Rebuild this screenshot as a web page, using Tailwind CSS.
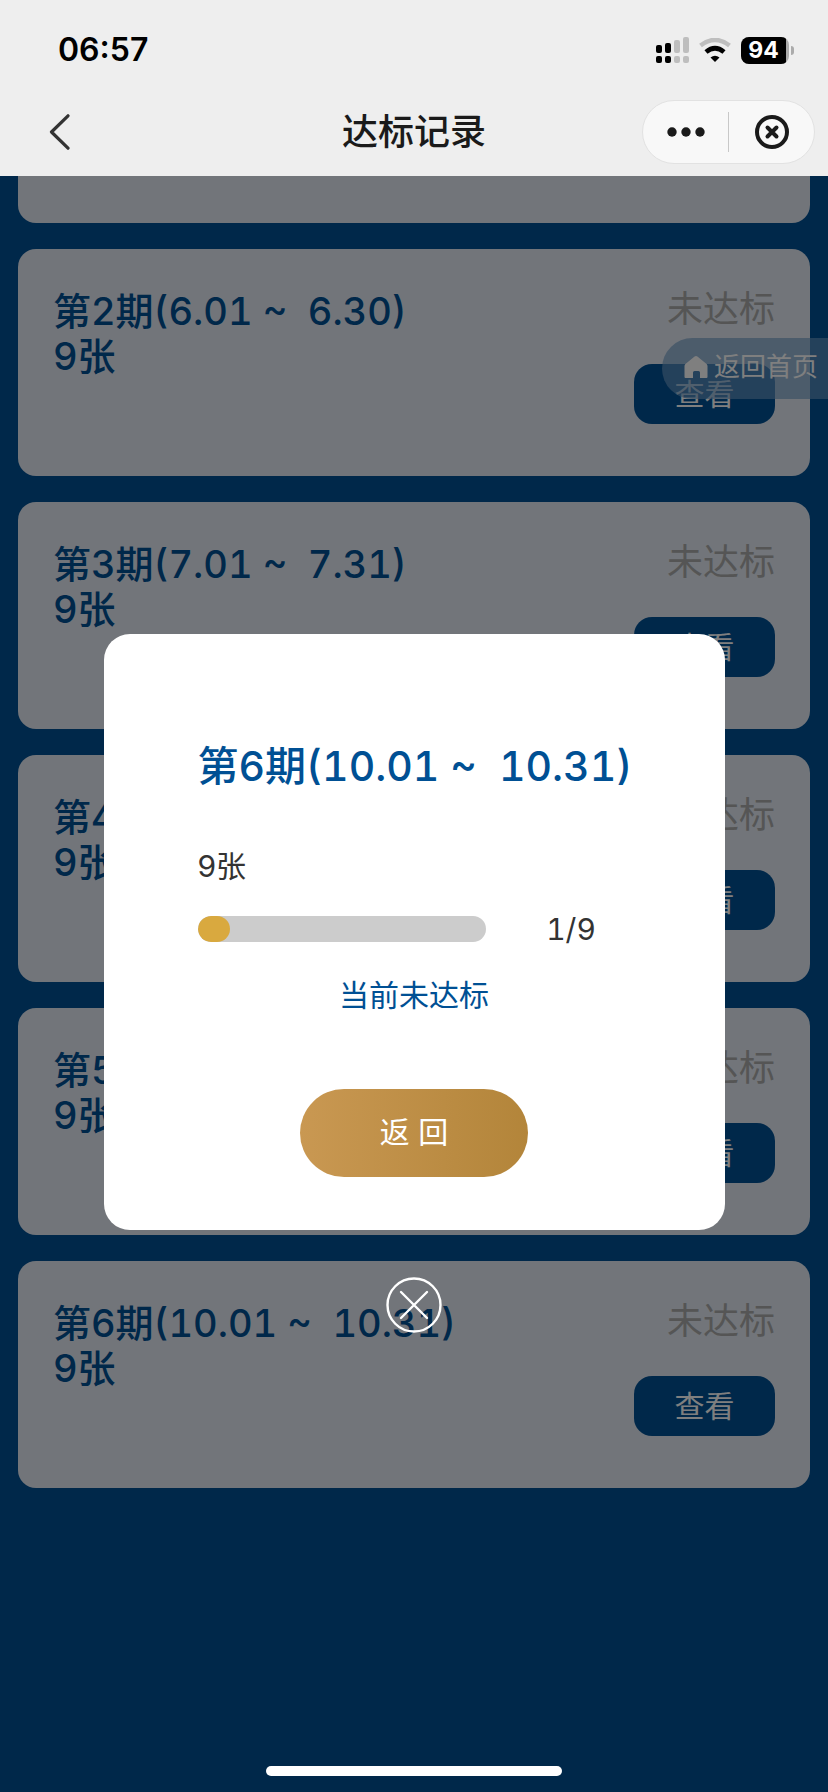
<!DOCTYPE html>
<html lang="zh-CN">
<head>
<meta charset="utf-8">
<meta name="viewport" content="width=device-width, initial-scale=1">
<title>达标记录</title>
<script src="https://cdn.jsdelivr.net/npm/@tailwindcss/browser@4"></script>
</head>
<body class="flex min-h-screen flex-col bg-[#005094] font-['Inter','Noto_Sans_CJK_SC',sans-serif]">
  <header class="bg-[#eeeeee]">
    <div class="flex h-[88px] items-center justify-between pt-3 pr-[34px] pl-[58px]">
      <time class="text-[32px] leading-10 font-semibold text-black">06:57</time>
      <div class="flex items-center gap-2.5">
        <svg class="h-[27px] w-[33px]" viewBox="0 0 33 27" aria-label="信号">
          <g fill="#000"><rect x="0" y="8" width="6" height="8" rx="2"/><rect x="9" y="6" width="6" height="10" rx="2"/><rect x="0" y="19" width="6" height="7" rx="2"/><rect x="9" y="19" width="6" height="7" rx="2"/></g>
          <g fill="#bebebe"><rect x="18" y="3" width="6" height="13" rx="2"/><rect x="27" y="0" width="6" height="16" rx="2"/><rect x="18" y="19" width="6" height="7" rx="2"/><rect x="27" y="19" width="6" height="7" rx="2"/></g>
        </svg>
        <svg class="h-6 w-8" viewBox="0 0 32 24" fill="none" aria-label="无线网络">
          <path d="M1.500 7.500Q16-3.500 30.500 7.500" stroke="#bebebe" stroke-width="4.600"/>
          <path d="M7 14Q16 6.600 25 14" stroke="#000" stroke-width="4.800"/>
          <path d="M11.500 19.500Q16 16 20.500 19.500L16 24Z" fill="#000"/>
        </svg>
        <div class="flex items-center gap-0.5">
          <div class="h-[27px] w-12 overflow-hidden rounded-lg bg-[#ababab]">
            <div class="flex h-full w-[45px] items-center justify-center bg-black text-[23px] font-bold text-white">94</div>
          </div>
          <div class="h-[9px] w-[3px] rounded-r-full bg-[#ababab]"></div>
        </div>
      </div>
    </div>
    <div class="grid h-[88px] grid-cols-[1fr_auto_1fr] items-center px-[13px]">
      <button type="button" aria-label="返回上一页" class="ml-[29px] flex h-12 w-9 items-center justify-center">
        <svg class="h-9 w-6" viewBox="0 0 24 36" fill="none" stroke="#333" stroke-width="3.200" stroke-linecap="round" stroke-linejoin="round"><path d="M20 1.800L3.500 18L20 34.200"/></svg>
      </button>
      <h1 class="text-[36px] leading-[48px] font-medium text-[#1a1a1a]">达标记录</h1>
      <div class="flex h-16 w-[173px] items-center justify-self-end rounded-full border border-[#e2e2e2] bg-[#f8f8f8]">
        <button type="button" aria-label="更多" class="flex h-full flex-1 items-center justify-center">
          <svg class="h-[10px] w-[38px]" viewBox="0 0 38 10" fill="#1a1a1a"><circle cx="5" cy="5" r="4.700"/><circle cx="19" cy="5" r="4.700"/><circle cx="33" cy="5" r="4.700"/></svg>
        </button>
        <div class="h-10 w-px bg-[#c8c8c8]"></div>
        <button type="button" aria-label="关闭" class="flex h-full flex-1 items-center justify-center">
          <svg class="h-[34px] w-[34px]" viewBox="0 0 34 34" fill="none" stroke="#1a1a1a" stroke-width="4" stroke-linecap="round"><circle cx="17" cy="17" r="15"/><path d="M12.500 12.500l9 9m0-9l-9 9"/></svg>
        </button>
      </div>
    </div>
  </header>

  <main class="relative flex-1 overflow-hidden">
    <div class="flex flex-col gap-[26px] px-[18px]">
      <div class="h-[47px] rounded-b-[18px] bg-[#e4eaf4]"></div>

      <section class="flex min-h-[227px] items-start justify-between rounded-[18px] bg-[#e4eaf4] px-[35px] pt-10">
        <h2 class="text-[38px] leading-[45px] font-medium whitespace-pre text-[#005094] tabular-nums">第2期(6.01 ~  6.30)<br>9张</h2>
        <div class="flex flex-col items-end gap-[35px]">
          <span class="text-[36px] leading-10 text-[#aaaaaa]">未达标</span>
          <button type="button" class="h-[60px] w-[141px] rounded-[18px] bg-[#005094] text-[30px] text-white">查看</button>
        </div>
      </section>

      <section class="flex min-h-[227px] items-start justify-between rounded-[18px] bg-[#e4eaf4] px-[35px] pt-10">
        <h2 class="text-[38px] leading-[45px] font-medium whitespace-pre text-[#005094] tabular-nums">第3期(7.01 ~  7.31)<br>9张</h2>
        <div class="flex flex-col items-end gap-[35px]">
          <span class="text-[36px] leading-10 text-[#aaaaaa]">未达标</span>
          <button type="button" class="h-[60px] w-[141px] rounded-[18px] bg-[#005094] text-[30px] text-white">查看</button>
        </div>
      </section>

      <section class="flex min-h-[227px] items-start justify-between rounded-[18px] bg-[#e4eaf4] px-[35px] pt-10">
        <h2 class="text-[38px] leading-[45px] font-medium whitespace-pre text-[#005094] tabular-nums">第4期(8.01 ~  8.31)<br>9张</h2>
        <div class="flex flex-col items-end gap-[35px]">
          <span class="text-[36px] leading-10 text-[#aaaaaa]">未达标</span>
          <button type="button" class="h-[60px] w-[141px] rounded-[18px] bg-[#005094] text-[30px] text-white">查看</button>
        </div>
      </section>

      <section class="flex min-h-[227px] items-start justify-between rounded-[18px] bg-[#e4eaf4] px-[35px] pt-10">
        <h2 class="text-[38px] leading-[45px] font-medium whitespace-pre text-[#005094] tabular-nums">第5期(9.01 ~  9.30)<br>9张</h2>
        <div class="flex flex-col items-end gap-[35px]">
          <span class="text-[36px] leading-10 text-[#aaaaaa]">未达标</span>
          <button type="button" class="h-[60px] w-[141px] rounded-[18px] bg-[#005094] text-[30px] text-white">查看</button>
        </div>
      </section>

      <section class="flex min-h-[227px] items-start justify-between rounded-[18px] bg-[#e4eaf4] px-[35px] pt-10">
        <h2 class="text-[38px] leading-[45px] font-medium whitespace-pre text-[#005094] tabular-nums">第6期(10.01 ~  10.31)<br>9张</h2>
        <div class="flex flex-col items-end gap-[35px]">
          <span class="text-[36px] leading-10 text-[#aaaaaa]">未达标</span>
          <button type="button" class="h-[60px] w-[141px] rounded-[18px] bg-[#005094] text-[30px] text-white">查看</button>
        </div>
      </section>
    </div>

    <a href="#" class="absolute top-[162px] right-0 flex h-[61px] items-center gap-1.5 rounded-l-full bg-[#6e9cc8]/65 pr-2.5 pb-1 pl-[22px] text-[26px] text-white">
      <svg class="h-6 w-6" viewBox="0 0 24 24" fill="#fff"><path d="M10.600 1.600Q12 .4 13.400 1.600L22.600 9Q23.500 9.800 23.500 11V22Q23.500 23 22.500 23H16V17.500Q16 16 14.500 16H10.500Q9 16 9 17.500V23H1.500Q.5 23 .5 22V11Q.5 9.800 1.400 9Z"/></svg>
      返回首页
    </a>

    <div class="absolute inset-0 flex flex-col items-center justify-center gap-[47px] bg-black/50 pb-0.5">
      <div role="dialog" aria-labelledby="period" class="flex min-h-[596px] w-3/4 flex-col rounded-[26px] bg-white px-[94px] pt-[104px] pb-[53px]">
        <h2 id="period" class="text-[41px] leading-[56px] font-medium whitespace-pre text-[#005094] tabular-nums">第6期(10.01 ~  10.31)</h2>
        <p class="mt-[52px] text-[30px] leading-10 text-[#333333]">9张</p>
        <div class="mt-[23px] flex items-center gap-[60px]">
          <div role="progressbar" aria-label="进度" aria-valuenow="1" aria-valuemin="0" aria-valuemax="9" class="h-[26px] w-2/3 overflow-hidden rounded-full bg-[#cccccc]">
            <div class="h-full rounded-full bg-[#d9a93f]" style="width:11.1%"></div>
          </div>
          <span class="text-[30px] leading-10 text-[#333333] tabular-nums">1/9</span>
        </div>
        <p class="mt-[26px] text-center text-[30px] leading-10 text-[#005094]">当前未达标</p>
        <button type="button" class="mx-auto mt-auto h-[88px] w-[228px] rounded-full bg-linear-to-r from-[#c99852] to-[#b3853a] text-[30px] whitespace-pre text-white">返 回</button>
      </div>
      <button type="button" aria-label="关闭弹窗" class="h-14 w-14">
        <svg viewBox="0 0 56 56" fill="none" stroke="#fff" stroke-width="2.400" stroke-linecap="round"><circle cx="28" cy="28" r="26.500"/><path d="M15 15l26 26m0-26l-26 26"/></svg>
      </button>
    </div>
    <div class="absolute inset-x-0 bottom-4 flex justify-center"><div class="h-[10px] w-[296px] rounded-full bg-white"></div></div>
  </main>
</body>
</html>
